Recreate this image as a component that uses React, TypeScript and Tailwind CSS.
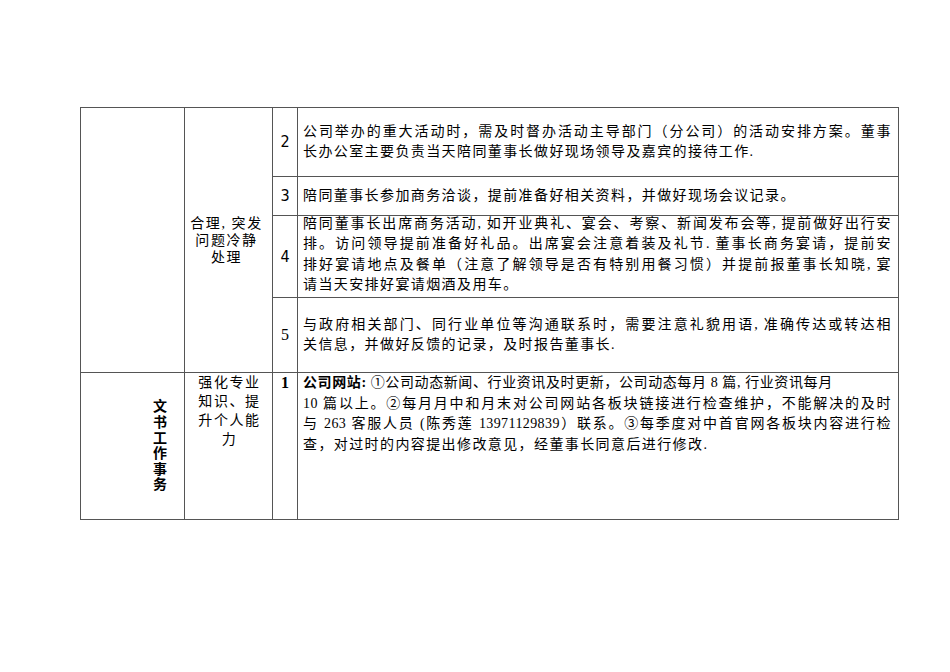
import React from "react";

const BODY = "font-['Liberation_Serif','Noto_Sans_CJK_SC',serif]";
const NUM_SANS = "font-['Liberation_Sans_Narrow','DejaVu_Sans_Condensed','Liberation_Sans',sans-serif]";
const NUM_SERIF = "font-['Liberation_Serif',serif]";
const HEI = "font-['Noto_Sans_CJK_SC',sans-serif]";

type Line = { t: React.ReactNode; j?: boolean; s?: string };

function Lines({ lines, lead = "leading-[20.5px]" }: { lines: Line[]; lead?: string }) {
  return (
    <div className={`${BODY} text-[14px] ${lead} text-black`}>
      {lines.map((l, i) =>
        l.j ? (
          <div key={i} className={`text-justify [text-align-last:justify] ${l.s ?? "tracking-[0.4px]"}`}>
            {l.t}
          </div>
        ) : (
          <div key={i} className={`whitespace-nowrap ${l.s ?? "tracking-[1.4px]"}`}>
            {l.t}
          </div>
        )
      )}
    </div>
  );
}

const cell = "border-r border-b border-[#555]";

export default function App() {
  return (
    <div className="w-[950px] h-[672px] bg-white pt-[107px] pl-[80px]">
      <div className="grid w-[819px] grid-cols-[104px_88px_25px_601px] grid-rows-[69px_39px_82px_75px_147px] border-l border-t border-[#555]">
        {/* column 1, rows 1-4 */}
        <div className={`${cell} col-start-1 row-start-1 row-span-4`} />
        {/* column 2, rows 1-4 */}
        <div className={`${cell} col-start-2 row-start-1 row-span-4 flex flex-col items-center justify-center`}>
          <div className={`${BODY} text-[14px] leading-[17px] tracking-[1.6px] text-center text-black pr-[4px]`}>
            <div>合理, 突发</div>
            <div>问题冷静</div>
            <div>处理</div>
          </div>
        </div>

        {/* row 1: item 2 */}
        <div className={`${cell} col-start-3 row-start-1 flex items-center justify-center ${NUM_SANS} text-[16px] text-black`}>2</div>
        <div className={`${cell} col-start-4 row-start-1 flex flex-col justify-center pl-[5px] pr-[7px]`}>
          <Lines
            lines={[
              { t: "公司举办的重大活动时，需及时督办活动主导部门（分公司）的活动安排方案。董事", j: true },
              { t: "长办公室主要负责当天陪同董事长做好现场领导及嘉宾的接待工作." },
            ]}
            lead="leading-[20px]"
          />
        </div>

        {/* row 2: item 3 */}
        <div className={`${cell} col-start-3 row-start-2 flex items-center justify-center ${NUM_SANS} text-[16px] text-black`}>3</div>
        <div className={`${cell} col-start-4 row-start-2 flex flex-col justify-center pl-[5px] pr-[7px]`}>
          <Lines lines={[{ t: "陪同董事长参加商务洽谈，提前准备好相关资料，并做好现场会议记录。" }]} />
        </div>

        {/* row 3: item 4 */}
        <div className={`${cell} col-start-3 row-start-3 flex items-center justify-center ${NUM_SANS} text-[16px] text-black`}>4</div>
        <div className={`${cell} col-start-4 row-start-3 flex flex-col justify-center pl-[5px] pr-[7px] pb-[4px]`}>
          <Lines
            lines={[
              { t: "陪同董事长出席商务活动, 如开业典礼、宴会、考察、新闻发布会等, 提前做好出行安", j: true },
              { t: "排。访问领导提前准备好礼品。出席宴会注意着装及礼节. 董事长商务宴请，提前安", j: true },
              { t: "排好宴请地点及餐单（注意了解领导是否有特别用餐习惯）并提前报董事长知晓, 宴", j: true },
              { t: "请当天安排好宴请烟酒及用车。" },
            ]}
          />
        </div>

        {/* row 4: item 5 */}
        <div className={`${cell} col-start-3 row-start-4 flex items-center justify-center ${NUM_SERIF} text-[16px] text-black`}>5</div>
        <div className={`${cell} col-start-4 row-start-4 flex flex-col justify-center pl-[5px] pr-[7px]`}>
          <Lines
            lines={[
              { t: "与政府相关部门、同行业单位等沟通联系时，需要注意礼貌用语, 准确传达或转达相", j: true },
              { t: "关信息，并做好反馈的记录，及时报告董事长." },
            ]}
            lead="leading-[20px]"
          />
        </div>

        {/* row 5 */}
        <div className={`${cell} col-start-1 row-start-5 flex items-center justify-end pr-[16px]`}>
          <div
            className={`${HEI} [writing-mode:vertical-rl] [text-orientation:upright] font-bold text-[14px] leading-[16px] tracking-[1.6px] text-black`}
          >
            文书工作事务
          </div>
        </div>
        <div className={`${cell} col-start-2 row-start-5 flex justify-center`}>
          <div className={`${BODY} text-[14px] leading-[19px] tracking-[1.6px] text-center text-black pl-[2px]`}>
            <div>强化专业</div>
            <div>知识、提</div>
            <div>升个人能</div>
            <div>力</div>
          </div>
        </div>
        <div className={`${cell} col-start-3 row-start-5 flex justify-center ${NUM_SERIF} font-bold text-[16px] leading-[20px] text-black`}>1</div>
        <div className={`${cell} col-start-4 row-start-5 pl-[5px] pr-[7px]`}>
          <Lines
            lines={[
              {
                t: (
                  <>
                    <span className="font-bold">公司网站:</span> ①公司动态新闻、行业资讯及时更新，公司动态每月 8 篇, 行业资讯每月
                  </>
                ),
                s: "tracking-[0.6px]",
              },
              { t: "10 篇以上。②每月月中和月末对公司网站各板块链接进行检查维护，不能解决的及时", j: true },
              { t: "与 263 客服人员 (陈秀莲 13971129839）联系。③每季度对中首官网各板块内容进行检", j: true },
              { t: "查，对过时的内容提出修改意见，经董事长同意后进行修改." },
            ]}
          />
        </div>
      </div>
    </div>
  );
}
